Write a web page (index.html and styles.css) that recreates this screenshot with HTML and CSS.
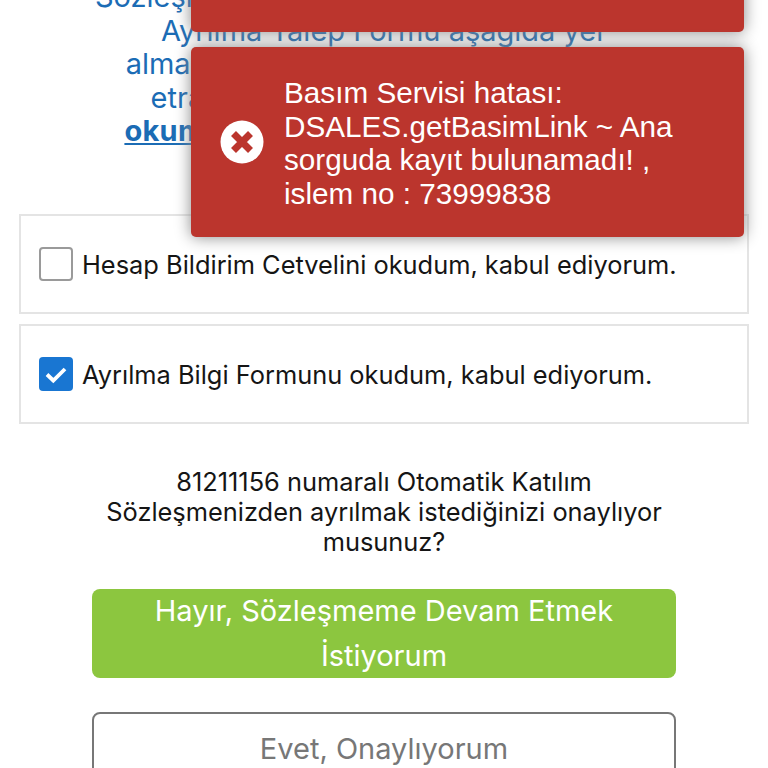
FILE: index.html
```html
<!DOCTYPE html>
<html lang="tr">
<head>
<meta charset="utf-8">
<title>Ayrılma Onayı</title>
<link rel="stylesheet" href="styles.css">
</head>
<body>
<main class="page">
  <p class="intro">Sözleşmenizden ayrılmanız için hazırlanan<br>Ayrılma Talep Formu aşağıda yer<br>almaktadır. Devam etmek için mutlaka<br>etraflıca inceleyin, ardından formu<br><a href="#" class="intro-link">okumak için lütfen buraya tıklayınız.</a></p>
  <label class="check-card">
    <span class="box"></span>
    <span>Hesap Bildirim Cetvelini okudum, kabul ediyorum.</span>
  </label>
  <label class="check-card">
    <span class="box box-on"><svg viewBox="0 0 34 34" width="34" height="34"><path d="M8 17.500l6.300 6L26 12" fill="none" stroke="#fff" stroke-width="3.800"/></svg></span>
    <span>Ayrılma Bilgi Formunu okudum, kabul ediyorum.</span>
  </label>
  <p class="question">81211156 numaralı Otomatik Katılım Sözleşmenizden ayrılmak istediğinizi onaylıyor musunuz?</p>
  <div class="actions">
    <a href="#" class="btn btn-green">Hayır, Sözleşmeme Devam Etmek İstiyorum</a>
    <a href="#" class="btn btn-outline">Evet, Onaylıyorum</a>
  </div>
</main>
<div class="toasts">
  <div class="toast toast-clipped"></div>
  <div class="toast">
    <svg class="toast-icon" viewBox="0 0 44 44" width="44" height="44"><circle cx="22" cy="22" r="21.500" fill="#fff"/><path d="M13.500 13.500l17 17M30.500 13.500l-17 17" stroke="#bb352d" stroke-width="7" fill="none"/></svg>
    <div class="toast-text">Basım Servisi hatası: DSALES.getBasimLink ~ Ana sorguda kayıt bulunamadı! , islem no : 73999838</div>
  </div>
</div>
</body>
</html>
```
FILE: styles.css
```css
* { box-sizing: border-box; }
html, body { margin: 0; height: 768px; overflow: hidden; background: #fff; }
body { position: relative; font-family: Inter, "Noto Sans", sans-serif; color: #111; }
.page { padding: 0 19px; margin-top: -20px; }
.intro {
  margin: 0 0 66.500px;
  font-size: 29px;
  line-height: 33.500px;
  text-align: center;
  white-space: nowrap;
  color: #1b6cb5;
}
.intro-link { font-weight: 700; letter-spacing: 0.3px; color: #1b6cb5; text-decoration: underline; }
.check-card {
  display: flex;
  align-items: center;
  gap: 9px;
  height: 100px;
  margin-bottom: 10px;
  padding: 0 18px;
  border: 2px solid #e4e4e4;
  font-size: 25.400px;
  color: #151515;
}
.box {
  flex: none;
  width: 34px;
  height: 34px;
  border: 2px solid #9a9a9a;
  border-radius: 4px;
  background: #fff;
}
.box-on { border: 0; background: #1976d2; }
.box-on svg { display: block; }
.question {
  margin: 43px 60px 32px;
  font-size: 25.400px;
  line-height: 30px;
  text-align: center;
  color: #151515;
}
.actions { display: flex; flex-direction: column; gap: 34px; padding: 0 73px; }
.btn {
  display: block;
  padding: 0 40px;
  border-radius: 8px;
  font-size: 29px;
  line-height: 44.500px;
  text-align: center;
  text-decoration: none;
}
.btn-green { background: #8cc63f; color: #fff; }
.btn-outline { padding: 13px 40px; border: 2px solid #777; color: #777; background: #fff; }
.toasts {
  position: absolute;
  top: -158px;
  right: 24px;
  width: 553px;
  display: flex;
  flex-direction: column;
  gap: 15px;
}
.toast {
  display: flex;
  align-items: center;
  gap: 20px;
  height: 190px;
  padding: 0 50px 0 29px;
  border-radius: 5px;
  background: #bb352d;
  color: #fff;
  box-shadow: 0 0 16px #888;
  font-family: "Liberation Sans", Arial, sans-serif;
  font-size: 29.700px;
  line-height: 33.500px;
}
.toast-icon { flex: none; }
.toast-text { flex: 1; padding-top: 2px; }
```
